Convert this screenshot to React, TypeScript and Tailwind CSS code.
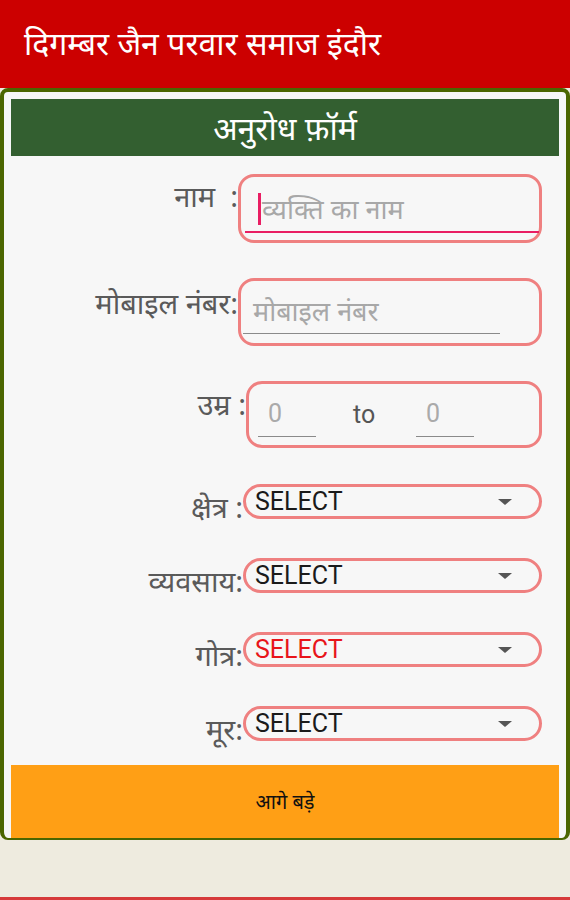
import React from 'react';

const font = { fontFamily: '"Noto Sans", Roboto, sans-serif' };

const selects = [
  { label: 'क्षेत्र :', red: false },
  { label: 'व्यवसाय:', red: false },
  { label: 'गोत्र:', red: true },
  { label: 'मूर:', red: false },
];

function SelectRow({ label, red }: { label: string; red: boolean }) {
  return (
    <div className="flex items-start h-[35px] pr-[24px]">
      <div className="w-[239px] shrink-0 h-[35px] text-right text-[29px] leading-[40px] text-[#5a5a5a] pt-[3px]">{label}</div>
      <div className="flex-1 h-[35px] border-[3px] border-[#ef8080] rounded-full flex items-center pl-[9px] pr-[27px]">
        <span className={`flex-1 font-['Roboto'] text-[25px] leading-[28px] ${red ? 'text-[#e8141a]' : 'text-[#1a1a1a]'}`}>
          SELECT
        </span>
        <span className="w-0 h-0 border-l-[7px] border-r-[7px] border-t-[6px] border-l-transparent border-r-transparent border-t-[#555]" />
      </div>
    </div>
  );
}

export default function App() {
  return (
    <div className="h-[900px] flex flex-col bg-[#eeebdf]" style={font}>
      <header className="h-[88px] shrink-0 bg-[#cc0000] flex items-center px-6">
        <h1 className="text-white text-[32px] leading-[40px] mb-[2px]">दिगम्बर जैन परवार समाज इंदौर</h1>
      </header>

      <div className="h-[752px] shrink-0 border-x-4 border-t-4 border-b-2 border-[#4b6600] rounded-[8px] bg-[#f7f7f7] flex flex-col">
        <div className="mx-[7px] mt-[7px] h-[57px] bg-[#335f30] flex items-center justify-center">
          <h2 className="text-white text-[32px] leading-[40px]">अनुरोध फ़ॉर्म</h2>
        </div>

        <div className="flex flex-col mt-[18px]">
          {/* name */}
          <div className="flex items-start pr-[24px]">
            <div className="w-[234px] shrink-0 text-right text-[29px] leading-[40px] text-[#5a5a5a] pt-[2px] whitespace-pre">नाम  :</div>
            <div className="flex-1 h-[69px] border-[3px] border-[#ef8080] rounded-[16px] pl-[4px] pt-[10px]">
              <div className="h-[46px] border-b-2 border-[#e91e63] flex items-center pl-[13px]">
                <span className="w-[3px] h-[32px] bg-[#e91e63] mr-[1px]" />
                <span className="text-[27px] leading-[34px] text-[#a8a8a8]">व्यक्ति का नाम</span>
              </div>
            </div>
          </div>

          {/* mobile */}
          <div className="flex items-start pr-[24px] mt-[35px]">
            <div className="w-[234px] shrink-0 text-right text-[29px] leading-[40px] text-[#5a5a5a] pt-[5px]">मोबाइल नंबर:</div>
            <div className="flex-1 h-[68px] border-[3px] border-[#ef8080] rounded-[16px] pl-[2px] pt-[8px]">
              <div className="w-[257px] h-[45px] border-b border-[#8a8a8a] flex items-center pl-[10px]">
                <span className="text-[27px] leading-[34px] text-[#a8a8a8]">मोबाइल नंबर</span>
              </div>
            </div>
          </div>

          {/* age */}
          <div className="flex items-start pr-[24px] mt-[35px]">
            <div className="w-[242px] shrink-0 text-right text-[29px] leading-[40px] text-[#5a5a5a] pt-[3px]">उम्र :</div>
            <div className="flex-1 h-[67px] border-[3px] border-[#ef8080] rounded-[16px] pl-[9px] pt-[8px] flex items-start">
              <div className="w-[58px] h-[45px] border-b border-[#8a8a8a] flex items-center pl-[10px]">
                <span className="font-['Roboto'] text-[25px] leading-[30px] text-[#aaa]">0</span>
              </div>
              <div className="ml-[37px] w-[63px] h-[45px] flex items-center">
                <span className="font-['Roboto'] text-[25px] leading-[30px] text-[#555]">to</span>
              </div>
              <div className="w-[58px] h-[45px] border-b border-[#8a8a8a] flex items-center pl-[10px]">
                <span className="font-['Roboto'] text-[25px] leading-[30px] text-[#aaa]">0</span>
              </div>
            </div>
          </div>

          <div className="flex flex-col gap-[39px] mt-[36px]">
            {selects.map((s) => (
              <SelectRow key={s.label} label={s.label} red={s.red} />
            ))}
          </div>
        </div>

        <button className="mt-auto mx-[7px] h-[73px] bg-[#ff9f15] flex items-center justify-center">
          <span className="text-[20px] leading-[28px] text-[#111]">आगे बड़े</span>
        </button>
      </div>

      <div className="flex-1" />
      <div className="h-[3px] bg-[#d63a3a]" />
    </div>
  );
}
